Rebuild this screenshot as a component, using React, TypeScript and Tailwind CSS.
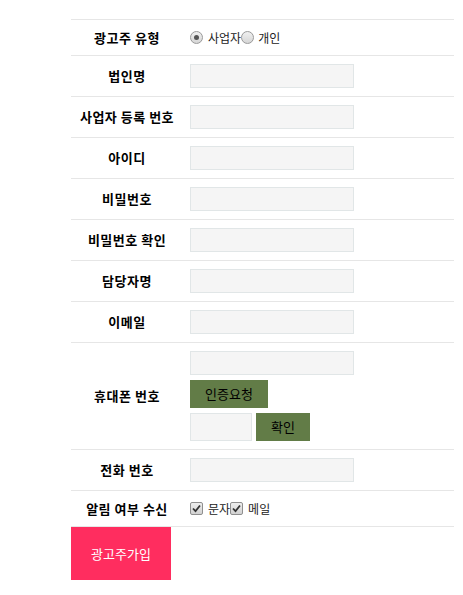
import React from "react";

const font = { fontFamily: '"Noto Sans CJK KR", "Noto Sans", sans-serif' };

function Radio({ checked }: { checked?: boolean }) {
  return (
    <span className="inline-flex w-[13px] h-[13px] rounded-full border border-[#9a9a9a] bg-gradient-to-b from-[#f0f0f0] to-[#d6d6d6] items-center justify-center shrink-0">
      {checked && <span className="w-[5px] h-[5px] rounded-full bg-[#555]" />}
    </span>
  );
}

function Check() {
  return (
    <span className="inline-flex w-[13px] h-[13px] rounded-[2px] border border-[#8f8f8f] bg-gradient-to-b from-[#ededed] to-[#d2d2d2] items-center justify-center shrink-0">
      <svg width="9" height="9" viewBox="0 0 9 9">
        <path d="M1 4.5 L3.5 7.2 L8 1.5" stroke="#333" strokeWidth="1.8" fill="none" />
      </svg>
    </span>
  );
}

function Input({ w = 164, h = 24 }: { w?: number; h?: number }) {
  return (
    <div
      className="border border-[#e1e6e7] bg-[#f5f5f5]"
      style={{ width: w, height: h }}
    />
  );
}

const labelCls =
  "w-[112px] flex items-center justify-center font-bold text-[13px] tracking-[0.5px] text-black";

function Row({ label, children }: { label: string; children: React.ReactNode }) {
  return (
    <div className="flex border-t border-[#e6e6e6]">
      <div className={labelCls}>{label}</div>
      <div className="pl-[7px] flex items-center py-[8px]">{children}</div>
    </div>
  );
}

export default function App() {
  return (
    <div className="w-[463px] h-[595px] bg-white" style={font}>
      <div className="pt-[19px] pl-[71px] w-[454px]">
        <div className="flex border-t border-[#e6e6e6] h-[36px]">
          <div className={labelCls}>광고주 유형</div>
          <div className="pl-[7px] flex items-center text-[12px] text-[#222]">
            <Radio checked />
            <span className="ml-[5px]">사업자</span>
            <Radio />
            <span className="ml-[4px]">개인</span>
          </div>
        </div>
        <Row label="법인명"><Input /></Row>
        <Row label="사업자 등록 번호"><Input /></Row>
        <Row label="아이디"><Input /></Row>
        <Row label="비밀번호"><Input /></Row>
        <Row label="비밀번호 확인"><Input /></Row>
        <Row label="담당자명"><Input /></Row>
        <Row label="이메일"><Input /></Row>
        <div className="flex border-t border-[#e6e6e6]">
          <div className={labelCls}>휴대폰 번호</div>
          <div className="pl-[7px] py-[8px] flex flex-col gap-[5px]">
            <Input />
            <div className="w-[78px] h-[28px] bg-[#627c47] flex items-center justify-center text-[13px] text-black">
              인증요청
            </div>
            <div className="flex gap-[4px]">
              <Input w={62} h={28} />
              <div className="w-[54px] h-[28px] bg-[#627c47] flex items-center justify-center text-[13px] text-black">
                확인
              </div>
            </div>
          </div>
        </div>
        <Row label="전화 번호"><Input /></Row>
        <div className="flex border-t border-b border-[#e6e6e6] h-[37px]">
          <div className={labelCls}>알림 여부 수신</div>
          <div className="pl-[7px] flex items-center text-[12px] text-[#222]">
            <Check />
            <span className="ml-[5px]">문자</span>
            <Check />
            <span className="ml-[5px]">메일</span>
          </div>
        </div>
        <div className="w-[100px] h-[53px] bg-[#ff2d5f] flex items-center justify-center text-white text-[13px]">
          광고주가입
        </div>
      </div>
    </div>
  );
}
